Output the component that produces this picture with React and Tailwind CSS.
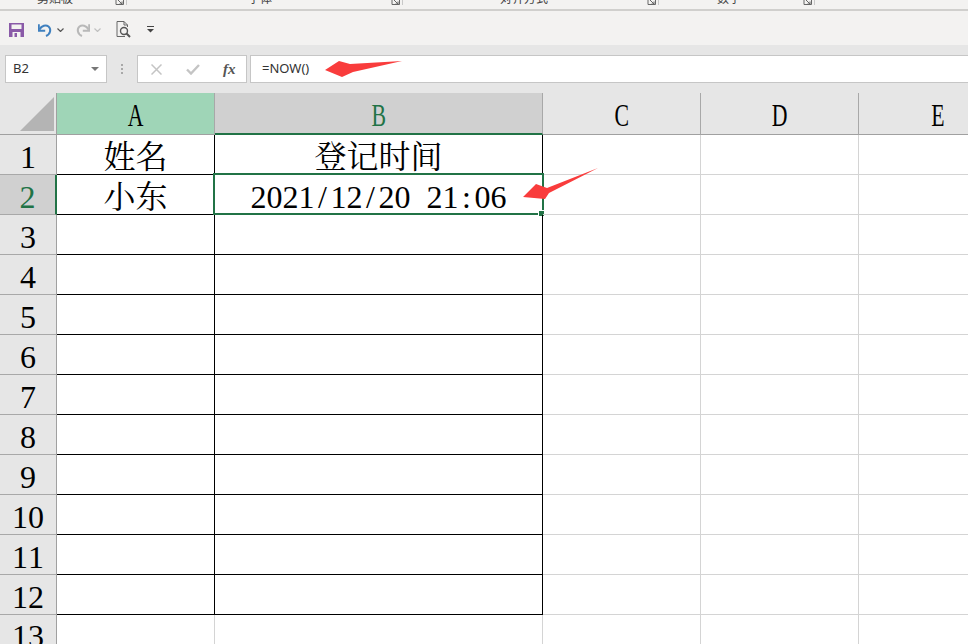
import React from 'react'

const serif = 'font-["Liberation_Serif","Noto_Serif_CJK_SC","Noto_Sans_CJK_SC",serif]'

const ribbonGroups = [
  { label: '剪贴板', width: 'w-[128px]', textPad: 'pl-[37px]' },
  { label: '字体', width: 'w-[276px]', textPad: 'pl-[120px]' },
  { label: '对齐方式', width: 'w-[256px]', textPad: 'pl-[96px]' },
  { label: '数字', width: 'w-[156px]', textPad: 'pl-[57px]' },
]

const columns = ['A', 'B', 'C', 'D', 'E']
const rows = [1, 2, 3, 4, 5, 6, 7, 8, 9, 10, 11, 12]

// SimSun half width digits: every char sits in a 16px box
function HalfWidth({ text }) {
  return (
    <span className="inline-flex">
      {text.split('').map((c, i) => (
        <span key={i} className="inline-block w-4 text-center">
          {c === ' ' ? '\u00a0' : c}
        </span>
      ))}
    </span>
  )
}

function RibbonGroup({ group }) {
  return (
    <div className={`${group.width} h-[9px] flex justify-between shrink-0 overflow-hidden`}>
      <span className={`${group.textPad} -mt-[8px] text-[12px] leading-[12px] text-[#444] font-["Noto_Sans_CJK_SC",sans-serif]`}>
        {group.label}
      </span>
      <div className="flex items-start">
        <svg width="9" height="6" viewBox="0 0 9 6" className="mr-[2px]">
          <path d="M1 0V4.5H8.5V0M3 0L7 4M7 1.5V4H4.5" fill="none" stroke="#666" strokeWidth="1" />
        </svg>
        <div className="w-px h-[5px] bg-[#c8c8c8] mr-[1px]" />
      </div>
    </div>
  )
}

function QuickBar() {
  return (
    <div className="h-[34px] bg-[#f3f2f1] relative flex items-center pl-[9px] pt-[3px]">
      <svg width="15" height="14" viewBox="0 0 15 14">
        <path d="M0 0H15V14H0Z" fill="#8a5aa8" />
        <path d="M2.5 1.5H12.5V6H2.5Z" fill="#f3f2f1" />
        <path d="M3.5 9H11.5V14H3.5Z" fill="#f3f2f1" />
        <path d="M5.5 10H8V14H5.5Z" fill="#8a5aa8" />
      </svg>
      <svg width="15" height="14" viewBox="0 0 15 14" className="ml-[14px]">
        <path d="M1.5 6.5C3.5 2.5 8 1.5 10.5 3.5C13.5 6 12.5 11 8 13" fill="none" stroke="#3f80bf" strokeWidth="2" />
        <path d="M0.8 1.2V7.8H7.2" fill="none" stroke="#3f80bf" strokeWidth="2" />
      </svg>
      <svg width="7" height="4" viewBox="0 0 7 4" className="ml-[4px]">
        <path d="M0.5 0.5L3.5 3.5L6.5 0.5" fill="none" stroke="#555" strokeWidth="1.2" />
      </svg>
      <svg width="15" height="14" viewBox="0 0 15 14" className="ml-[11px]">
        <path d="M13.5 6.5C11.5 2.5 7 1.5 4.5 3.5C1.5 6 2.5 11 7 13" fill="none" stroke="#b8b8b8" strokeWidth="2" />
        <path d="M14.2 1.2V7.8H7.8" fill="none" stroke="#b8b8b8" strokeWidth="2" />
      </svg>
      <svg width="7" height="4" viewBox="0 0 7 4" className="ml-[4px]">
        <path d="M0.5 0.5L3.5 3.5L6.5 0.5" fill="none" stroke="#c0c0c0" strokeWidth="1.2" />
      </svg>
      <svg width="15" height="17" viewBox="0 0 15 17" className="ml-[15px]">
        <path d="M8 0.5H1V15.5H9M8 0.5L11.5 4V6M8 0.5V4H11.5" fill="none" stroke="#666" strokeWidth="1" />
        <circle cx="8" cy="10" r="3.5" fill="none" stroke="#555" strokeWidth="1.4" />
        <path d="M10.5 12.5L14 16" stroke="#555" strokeWidth="2" />
      </svg>
      <svg width="7" height="7" viewBox="0 0 7 7" className="ml-[16px]">
        <path d="M0 0.5H7" stroke="#444" strokeWidth="1" />
        <path d="M0 3H7L3.5 6.5Z" fill="#444" />
      </svg>
    </div>
  )
}

function FormulaBar() {
  return (
    <div className="h-[48px] bg-[#e6e6e6] flex pt-[10px] pl-[5px]">
      <div className="w-[102px] h-[28px] bg-white border border-[#c6c6c6] flex items-center justify-between pl-[7px] pr-[7px]">
        <span className='text-[13px] text-[#333] font-["Noto_Sans",sans-serif]'>B2</span>
        <svg width="8" height="4" viewBox="0 0 8 4">
          <path d="M0 0H8L4 4Z" fill="#777" />
        </svg>
      </div>
      <div className="w-[30px] h-[28px] flex items-center justify-center">
        <div className="flex flex-col gap-[2px]">
          <div className="w-[2px] h-[2px] bg-[#a8a8a8]" />
          <div className="w-[2px] h-[2px] bg-[#a8a8a8]" />
          <div className="w-[2px] h-[2px] bg-[#a8a8a8]" />
        </div>
      </div>
      <div className="w-[110px] h-[28px] bg-white border border-[#c6c6c6] flex items-center pl-[13px] shrink-0">
        <svg width="11" height="11" viewBox="0 0 11 11">
          <path d="M0.5 0.5L10.5 10.5M10.5 0.5L0.5 10.5" stroke="#c4c4c4" strokeWidth="1.5" />
        </svg>
        <svg width="14" height="11" viewBox="0 0 14 11" className="ml-[24px]">
          <path d="M1 5.5L5 9.5L13 1" fill="none" stroke="#c4c4c4" strokeWidth="2.4" />
        </svg>
        <span className='ml-[23px] text-[15px] leading-none italic font-bold text-[#555] font-["Liberation_Serif",serif]'>fx</span>
      </div>
      <div className="ml-[3px] flex-1 h-[28px] bg-white border-y border-[#c6c6c6] border-l flex items-center pl-[11px]">
        <span className='text-[13px] text-[#333] font-["Noto_Sans",sans-serif]'>=NOW()</span>
      </div>
    </div>
  )
}

function HeaderRow() {
  const colStyle = {
    A: 'bg-[#9fd5b7] text-black border-b border-[#a0a0a0]',
    B: 'bg-[#d0d0d0] text-[#217346] border-b-2 border-[#217346]',
    C: 'bg-[#e6e6e6] text-black border-b border-[#a0a0a0]',
    D: 'bg-[#e6e6e6] text-black border-b border-[#a0a0a0]',
    E: 'bg-[#e6e6e6] text-black border-b border-[#a0a0a0]',
  }
  return (
    <div className="grid grid-cols-[57px_158px_328px_158px_158px_158px] h-[42px]">
      <div className="bg-[#e6e6e6] border-b border-r border-[#a0a0a0] flex items-end justify-end pr-[2px] pb-[3px]">
        <svg width="34" height="34" viewBox="0 0 34 34">
          <path d="M34 0V34H0Z" fill="#b4b4b4" />
        </svg>
      </div>
      {columns.map((c) => (
        <div
          key={c}
          className={`${colStyle[c]} border-r border-r-[#a8a8a8] flex items-center justify-center text-[32px] leading-none ${serif}`}
        >
          <span className="inline-block scale-x-[0.68] pt-[3px]">{c}</span>
        </div>
      ))}
    </div>
  )
}

function Cell({ children, dark }) {
  const border = dark
    ? 'border-r border-b border-black'
    : 'border-r border-b border-[#d4d4d4]'
  return (
    <div className={`${border} relative flex items-center justify-center pt-[4px] text-black text-[32px] leading-none ${serif}`}>
      {children}
    </div>
  )
}

function SheetRow({ n }) {
  const active = n === 2
  const data = {
    1: ['姓名', '登记时间'],
    2: ['小东', null],
  }[n]
  return (
    <div className="grid grid-cols-[57px_158px_328px_158px_158px_158px] h-[40px]">
      <div
        className={`border-b border-[#a8a8a8] flex items-center justify-center pt-[4px] text-[32px] leading-none ${serif} ${
          active
            ? 'bg-[#d0d0d0] text-[#217346] border-r-2 border-r-[#217346]'
            : 'bg-[#e6e6e6] text-black border-r border-r-[#a0a0a0]'
        }`}
      >
        <HalfWidth text={String(n)} />
      </div>
      <Cell dark>{data && data[0]}</Cell>
      <Cell dark>
        {data && data[1]}
        {active && (
          <>
            <HalfWidth text="2021/12/20 21:06" />
            {/* selected cell frame + fill handle */}
            <div className="absolute -left-[2px] -top-[2px] w-[331px] h-[42px] border-2 border-[#217346]" />
            <div className="absolute -right-[3px] -bottom-[3px] w-[7px] h-[7px] bg-[#217346] border border-white" />
          </>
        )}
      </Cell>
      <Cell />
      <Cell />
      <Cell />
    </div>
  )
}

function LastRow() {
  return (
    <div className="grid grid-cols-[57px_158px_328px_158px_158px_158px] h-[29px]">
      <div className={`bg-[#e6e6e6] border-r border-[#a0a0a0] flex justify-center text-[32px] leading-none pt-[5px] ${serif}`}>
        <HalfWidth text="13" />
      </div>
      <div className="border-r border-[#d4d4d4]" />
      <div className="border-r border-[#d4d4d4]" />
      <div className="border-r border-[#d4d4d4]" />
      <div className="border-r border-[#d4d4d4]" />
      <div />
    </div>
  )
}

export default function App() {
  return (
    <div className="relative w-[968px] h-[644px] overflow-hidden bg-white flex flex-col">
      <div className="h-[9px] bg-[#f3f2f1] flex">
        {ribbonGroups.map((g) => (
          <RibbonGroup key={g.label} group={g} />
        ))}
      </div>
      <div className="h-[2px] bg-[#d0cfcd]" />
      <QuickBar />
      <FormulaBar />
      <HeaderRow />
      {rows.map((n) => (
        <SheetRow key={n} n={n} />
      ))}
      <LastRow />

      {/* red annotation arrows drawn on top of the screenshot */}
      <svg className="absolute left-0 top-0 pointer-events-none" width="968" height="644" viewBox="0 0 968 644">
        <path d="M325 70L339 61L350 64L402 61L353 72L342 77Z" fill="#f93c3c" />
        <path d="M523 197L536 184L547 188L598 168L549 193L545 199Z" fill="#f93c3c" />
      </svg>
    </div>
  )
}
